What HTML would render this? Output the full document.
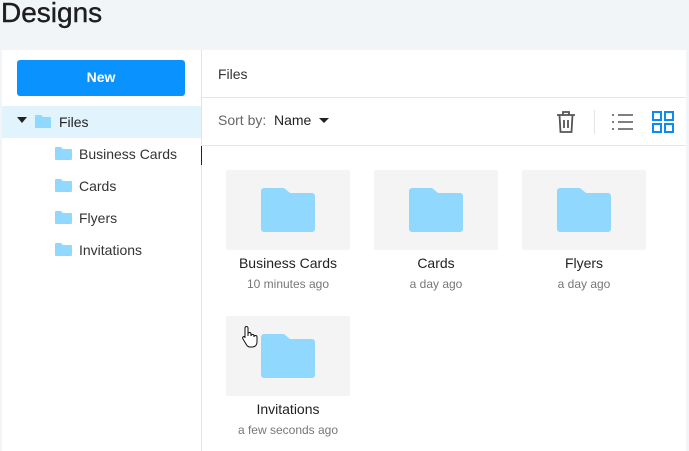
<!DOCTYPE html><html><head><style>
body{margin:0;width:689px;height:451px;background:#f2f5f8;font-family:"Liberation Sans",sans-serif;position:relative;overflow:hidden;color:#2b2b2b}
.a{position:absolute}
h1{position:absolute;left:1px;top:-3px;margin:0;font-size:28px;font-weight:normal;color:#1e1e1e;-webkit-text-stroke:0.4px #1e1e1e}
.panel{left:2px;top:50px;width:684px;height:401px;background:#fff}
.side{left:201px;top:50px;width:1px;height:401px;background:#e4e4e4}
.btn{left:17px;top:60px;width:168px;height:36px;background:#0a93ff;border-radius:3px;color:#fff;font-weight:bold;font-size:14px;text-align:center;line-height:34px}
.sel{left:2px;top:106px;width:199px;height:32px;background:#e1f3fd}
.t{font-size:14px;color:#333}
.hl{left:202px;height:1px;width:484px;background:#e6e6e6}
.card{width:124px;height:80px;background:#f4f4f4;border-radius:2px}
.nm{font-size:14px;color:#222;text-align:center;width:160px}
.tm{font-size:12px;color:#777;text-align:center;width:160px}
</style></head><body>
<h1>Designs</h1>
<div class="a panel"></div>
<div class="a side"></div>
<div class="a btn">New</div>
<div class="a sel"></div>
<svg class="a" style="left:17px;top:117px" width="10" height="6"><path d="M0 0h10L5 6z" fill="#222"/></svg>
<svg class="a" style="left:35px;top:115px" width="16" height="13"><path d="M1 0h5l2 2h7a1 1 0 0 1 1 1v9a1 1 0 0 1-1 1H1a1 1 0 0 1-1-1V1a1 1 0 0 1 1-1z" fill="#90d8fe"/></svg>
<div class="a t" style="left:59px;top:114px;color:#222">Files</div>
<svg class="a" style="left:55px;top:147px" width="17" height="13"><path d="M1 0h5l2 2h8a1 1 0 0 1 1 1v9a1 1 0 0 1-1 1H1a1 1 0 0 1-1-1V1a1 1 0 0 1 1-1z" fill="#90d8fe"/></svg>
<div class="a t" style="left:79px;top:146px">Business Cards</div>
<svg class="a" style="left:55px;top:179px" width="17" height="13"><path d="M1 0h5l2 2h8a1 1 0 0 1 1 1v9a1 1 0 0 1-1 1H1a1 1 0 0 1-1-1V1a1 1 0 0 1 1-1z" fill="#90d8fe"/></svg>
<div class="a t" style="left:79px;top:178px">Cards</div>
<svg class="a" style="left:55px;top:211px" width="17" height="13"><path d="M1 0h5l2 2h8a1 1 0 0 1 1 1v9a1 1 0 0 1-1 1H1a1 1 0 0 1-1-1V1a1 1 0 0 1 1-1z" fill="#90d8fe"/></svg>
<div class="a t" style="left:79px;top:210px">Flyers</div>
<svg class="a" style="left:55px;top:243px" width="17" height="13"><path d="M1 0h5l2 2h8a1 1 0 0 1 1 1v9a1 1 0 0 1-1 1H1a1 1 0 0 1-1-1V1a1 1 0 0 1 1-1z" fill="#90d8fe"/></svg>
<div class="a t" style="left:79px;top:242px">Invitations</div>
<div class="a" style="left:201px;top:146px;width:1px;height:19px;background:#222"></div>
<div class="a t" style="left:218px;top:66px;color:#333">Files</div>
<div class="a hl" style="top:97px"></div>
<div class="a t" style="left:218px;top:112px;color:#666">Sort by:</div>
<div class="a t" style="left:274px;top:112px;color:#222">Name</div>
<svg class="a" style="left:319px;top:118px" width="10" height="5"><path d="M0 0h10L5 5z" fill="#222"/></svg>
<svg class="a" style="left:556px;top:110px" width="20" height="24"><path d="M1 5h18M7 5V2h6v3M3.5 5l1 17h11l1-17M8 10v8M12 10v8" fill="none" stroke="#555" stroke-width="1.8"/></svg>
<div class="a" style="left:594px;top:110px;width:1px;height:24px;background:#e4e4e4"></div>
<svg class="a" style="left:612px;top:113px" width="22" height="18"><path d="M0 2h2M0 9h2M0 16h2M6 2h15M6 9h15M6 16h15" stroke="#555" stroke-width="1.6"/></svg>
<svg class="a" style="left:652px;top:111px" width="22" height="22"><g fill="none" stroke="#0a8cf0" stroke-width="2"><rect x="1" y="1" width="8" height="8"/><rect x="13" y="1" width="8" height="8"/><rect x="1" y="13" width="8" height="8"/><rect x="13" y="13" width="8" height="8"/></g></svg>
<div class="a hl" style="top:145px"></div>
<div class="a card" style="left:226px;top:170px"></div>
<div class="a card" style="left:374px;top:170px"></div>
<div class="a card" style="left:522px;top:170px"></div>
<div class="a card" style="left:226px;top:316px"></div>
<svg class="a" style="left:261px;top:188px" width="54" height="44"><path d="M3 0h20l6 5h22a3 3 0 0 1 3 3v33a3 3 0 0 1-3 3H3a3 3 0 0 1-3-3V3a3 3 0 0 1 3-3z" fill="#90d8fe"/></svg>
<svg class="a" style="left:409px;top:188px" width="54" height="44"><path d="M3 0h20l6 5h22a3 3 0 0 1 3 3v33a3 3 0 0 1-3 3H3a3 3 0 0 1-3-3V3a3 3 0 0 1 3-3z" fill="#90d8fe"/></svg>
<svg class="a" style="left:557px;top:188px" width="54" height="44"><path d="M3 0h20l6 5h22a3 3 0 0 1 3 3v33a3 3 0 0 1-3 3H3a3 3 0 0 1-3-3V3a3 3 0 0 1 3-3z" fill="#90d8fe"/></svg>
<svg class="a" style="left:261px;top:334px" width="54" height="44"><path d="M3 0h20l6 5h22a3 3 0 0 1 3 3v33a3 3 0 0 1-3 3H3a3 3 0 0 1-3-3V3a3 3 0 0 1 3-3z" fill="#90d8fe"/></svg>
<div class="a nm" style="left:208px;top:255px">Business Cards</div><div class="a tm" style="left:208px;top:277px">10 minutes ago</div>
<div class="a nm" style="left:356px;top:255px">Cards</div><div class="a tm" style="left:356px;top:277px">a day ago</div>
<div class="a nm" style="left:504px;top:255px">Flyers</div><div class="a tm" style="left:504px;top:277px">a day ago</div>
<div class="a nm" style="left:208px;top:401px">Invitations</div><div class="a tm" style="left:208px;top:423px">a few seconds ago</div>
<svg class="a" style="left:241px;top:325px" width="18" height="24"><path d="M4 13V3a1.5 1.5 0 0 1 3 0v8V9a1.5 1.5 0 0 1 3 0v2a1.5 1.5 0 0 1 3 0v1a1.5 1.5 0 0 1 3 0v5c0 3-2 5-5 5H9c-2 0-3-1-4-3l-3-5a1.4 1.4 0 0 1 2-2z" fill="#fff" stroke="#111" stroke-width="1"/></svg>
</body></html>
